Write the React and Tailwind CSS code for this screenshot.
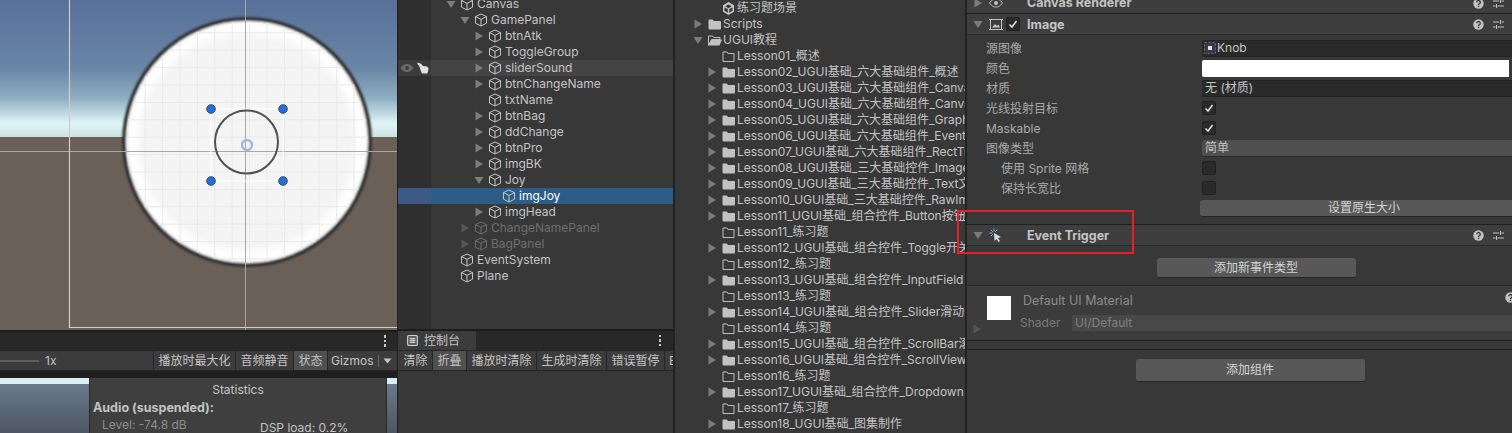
const Tri = ({ open, dim }) => (
  <svg width="10" height="10" viewBox="0 0 10 10" className="shrink-0">
    {open ? <path d="M0.500 2h9L5 9z" fill={dim ? "#555" : "#7c7c7c"} /> : <path d="M1.500 0.500v9L9 5z" fill={dim ? "#555" : "#7c7c7c"} />}
  </svg>
);
const Cube = ({ dim }) => (
  <svg width="14" height="14" viewBox="0 0 14 14" fill="none" stroke={dim ? "#6e6e6e" : "#c6c6c6"} strokeWidth="1" className="shrink-0">
    <path d="M7 1l5.500 2.600v6.600L7 13 1.500 10.200V3.600z" /><path d="M1.500 3.600L7 6.400l5.500-2.800M7 6.400V13" />
  </svg>
);
const Folder = ({ outline }) => (
  <svg width="13" height="11" viewBox="0 0 13 11" className="shrink-0">
    {outline
      ? <path d="M1 1h4l1 1.500h6v8H1z" fill="none" stroke="#c0c0c0" />
      : <path d="M0.500 1.500a1 1 0 0 1 1-1h3.200l1.200 1.500h6.100a1 1 0 0 1 1 1v6.500a1 1 0 0 1-1 1h-10.500a1 1 0 0 1-1-1z" fill="#c2c2c2" />}
  </svg>
);
const OpenFolder = () => (
  <svg width="14" height="11" viewBox="0 0 14 11" className="shrink-0">
    <path d="M0.500 10.500V1h4l1.200 1.500H12V4.500H3.500z" fill="none" stroke="#c2c2c2" />
    <path d="M3.500 4.500H14l-2.500 6H1z" fill="#c2c2c2" />
  </svg>
);
const Kebab = () => (
  <div className="flex flex-col gap-[2px]">
    <span className="w-[2.500px] h-[2.500px] bg-[#c8c8c8]" /><span className="w-[2.500px] h-[2.500px] bg-[#c8c8c8]" /><span className="w-[2.500px] h-[2.500px] bg-[#c8c8c8]" />
  </div>
);
const Help = () => (
  <svg width="11" height="11" viewBox="0 0 11 11" className="shrink-0">
    <circle cx="5.500" cy="5.500" r="5.200" fill="#c2c2c2" />
    <path d="M3.700 4.300a1.800 1.700 0 1 1 2.700 1.400c-.6.400-.9.600-.9 1.200" fill="none" stroke="#383838" strokeWidth="1.300" />
    <rect x="4.800" y="7.700" width="1.400" height="1.400" fill="#383838" />
  </svg>
);
const Presets = () => (
  <svg width="11" height="11" viewBox="0 0 11 11" stroke="#c2c2c2" strokeWidth="1" fill="none" className="shrink-0">
    <path d="M0 3h6M8.500 3H11M7.500 1v4M0 8h2.500M4.500 8H11M3.500 6v4" />
  </svg>
);
const Check = () => (
  <span className="w-[14px] h-[14px] rounded-[2px] bg-[#2a2a2a] border border-[#212121] flex items-center justify-center">
    <svg width="10" height="10" viewBox="0 0 10 10" fill="none" stroke="#e0e0e0" strokeWidth="1.500"><path d="M1.500 5.500L4 8l4.500-6" /></svg>
  </span>
);
const Box = () => <span className="w-[14px] h-[14px] rounded-[2px] bg-[#2a2a2a] border border-[#212121] block" />;

const hier = [
  { d: 0, t: "Canvas", a: "open" },
  { d: 1, t: "GamePanel", a: "open" },
  { d: 2, t: "btnAtk", a: "r" },
  { d: 2, t: "ToggleGroup", a: "r" },
  { d: 2, t: "sliderSound", a: "r", hover: true },
  { d: 2, t: "btnChangeName", a: "r" },
  { d: 2, t: "txtName" },
  { d: 2, t: "btnBag", a: "r" },
  { d: 2, t: "ddChange", a: "r" },
  { d: 2, t: "btnPro", a: "r" },
  { d: 2, t: "imgBK", a: "r" },
  { d: 2, t: "Joy", a: "open" },
  { d: 3, t: "imgJoy", sel: true },
  { d: 2, t: "imgHead", a: "r" },
  { d: 1, t: "ChangeNamePanel", a: "r", dim: true },
  { d: 1, t: "BagPanel", a: "r", dim: true },
  { d: 0, t: "EventSystem" },
  { d: 0, t: "Plane" },
];
const depthPad = ["pl-[15px]", "pl-[29px]", "pl-[43px]", "pl-[57px]"];

const HierRow = ({ r }) => (
  <div className={`h-[16px] flex items-center ${r.sel ? "bg-[#2c5d87] text-white" : r.hover ? "bg-[#444444]" : ""}`}>
    <div className={`w-[33px] h-full shrink-0 flex items-center gap-[3px] pl-[2px] ${r.sel ? "bg-[#3c5a85]" : r.hover ? "bg-[#3b3b3b]" : "bg-[#2f2f2f]"}`}>
      {r.hover && (
        <>
          <svg width="14" height="10" viewBox="0 0 14 10" className="shrink-0"><path d="M0.500 5C3 1.500 5 1 7 1s4 .500 6.500 4C11 8.500 9 9 7 9S3 8.500.500 5z" fill="#6a6a6a" /><circle cx="7" cy="5" r="2" fill="#3d3d3d" /></svg>
          <svg width="12" height="12" viewBox="0 0 12 12" className="shrink-0"><path d="M0.500 0.500l3.500 1.200 2 2.300 4 .500 1.500 1.500-.5 4-1 1.500H5L3.500 8 2.500 4.500l-2-2.500z" fill="#e2e2e2" /></svg>
        </>
      )}
    </div>
    <div className={`flex items-center ${depthPad[r.d]} ${r.dim ? "text-[#6e6e6e]" : ""}`}>
      <span className="w-[10px] mr-[4px] flex">{r.a ? <Tri open={r.a === "open"} dim={r.dim} /> : null}</span>
      <Cube dim={r.dim} />
      <span className="ml-[3px] whitespace-nowrap">{r.t}</span>
    </div>
  </div>
);

const T = "UGUI基础";
const proj = [
  ["Lesson01_概述", "o"],
  ["Lesson02_" + T + "_六大基础组件_概述", "f"],
  ["Lesson03_" + T + "_六大基础组件_Canvas", "f"],
  ["Lesson04_" + T + "_六大基础组件_CanvasScaler", "f"],
  ["Lesson05_" + T + "_六大基础组件_GraphicRaycaster", "f"],
  ["Lesson06_" + T + "_六大基础组件_EventSystem", "f"],
  ["Lesson07_" + T + "_六大基础组件_RectTransform", "f"],
  ["Lesson08_" + T + "_三大基础控件_Image图片", "f"],
  ["Lesson09_" + T + "_三大基础控件_Text文本", "f"],
  ["Lesson10_" + T + "_三大基础控件_RawImage", "f"],
  ["Lesson11_" + T + "_组合控件_Button按钮", "f"],
  ["Lesson11_练习题", "o"],
  ["Lesson12_" + T + "_组合控件_Toggle开关", "f"],
  ["Lesson12_练习题", "o"],
  ["Lesson13_" + T + "_组合控件_InputField", "f"],
  ["Lesson13_练习题", "o"],
  ["Lesson14_" + T + "_组合控件_Slider滑动条", "f"],
  ["Lesson14_练习题", "o"],
  ["Lesson15_" + T + "_组合控件_ScrollBar滚动条", "f"],
  ["Lesson16_" + T + "_组合控件_ScrollView", "f"],
  ["Lesson16_练习题", "o"],
  ["Lesson17_" + T + "_组合控件_Dropdown", "f"],
  ["Lesson17_练习题", "o"],
  ["Lesson18_" + T + "_图集制作", "f"],
];

const ToolBtn = ({ w, children, on }) => (
  <div className={`${w} h-full shrink-0 flex items-center justify-center whitespace-nowrap border-r border-[#262626] ${on ? "bg-[#505050]" : "bg-[#3c3c3c]"}`}>{children}</div>
);

const Row = ({ label, indent, children }) => (
  <div className="h-[20px] flex items-center">
    <div className={`w-[235px] shrink-0 pt-[1px] text-[#aaaaaa] whitespace-nowrap ${indent ? "pl-[34px]" : "pl-[19px]"}`}>{label}</div>
    <div className="flex-1 flex items-center min-w-0">{children}</div>
  </div>
);
const Field = ({ children }) => (
  <div className="w-full h-[17px] rounded-l-[3px] bg-[#2a2a2a] border-y border-[#232323] flex items-center pl-[2px] text-[#c4c4c4] gap-[1px]">{children}</div>
);
const CompHeader = ({ icon, check, title }) => (
  <div className="h-[21px] bg-[#3e3e3e] border-b border-[#2a2a2a] flex items-center shrink-0">
    <span className="ml-[6px] w-[10px] flex"><Tri open /></span>
    <span className="ml-[5px] w-[16px] flex justify-center">{icon}</span>
    <span className="w-[14px] ml-[2px] flex">{check}</span>
    <span className="ml-[7px] pt-[1px] font-bold text-[12.500px] text-[#c4c4c4] whitespace-nowrap">{title}</span>
    <span className="ml-auto flex items-center gap-[9px] pr-[8px]"><Help /><Presets /></span>
  </div>
);
const ActionBtn = ({ w, h, children }) => (
  <div className={`${w} ${h} bg-[#585858] rounded-[3px] border-b border-[#242424] flex items-center justify-center text-[#d4d4d4]`}>{children}</div>
);

const grid = [];
for (let i = 0; i < 24; i++) grid.push(i * 17.400 + 1);

export default function App() {
  return (
    <div className="relative w-[1512px] h-[433px] overflow-hidden flex bg-[#232323] text-[#c4c4c4] text-[12px] leading-[16px] font-['Inter','Noto_Sans_CJK_SC',sans-serif]">
      {/* Scene + game column */}
      <div className="w-[398px] shrink-0 flex flex-col border-r border-[#1f1f1f]">
        <svg width="397" height="330" viewBox="0 0 397 330" className="shrink-0 block">
          <defs>
            <linearGradient id="sky" x1="0" y1="0" x2="0" y2="1">
              <stop offset="0" stopColor="#58709a" />
              <stop offset="0.5" stopColor="#6a86a6" />
              <stop offset="0.72" stopColor="#8fb0c2" />
              <stop offset="0.9" stopColor="#dff4f7" />
              <stop offset="1" stopColor="#cfe4e2" />
            </linearGradient>
            <radialGradient id="knob" cx="0.5" cy="0.5" r="0.5">
              <stop offset="0.84" stopColor="#f4f4f4" />
              <stop offset="0.93" stopColor="#ffffff" />
              <stop offset="1" stopColor="#f6f6f6" />
            </radialGradient>
            <filter id="soft"><feGaussianBlur stdDeviation="1.300" /></filter>
            <clipPath id="cc"><circle cx="247" cy="142" r="121" /></clipPath>
          </defs>
          <rect width="397" height="330" fill="#6a6058" />
          <rect width="397" height="137" fill="url(#sky)" />
          <circle cx="247" cy="142" r="123" fill="url(#knob)" stroke="#333333" strokeWidth="4" filter="url(#soft)" />
          <g clipPath="url(#cc)" stroke="#e9e9e9" strokeWidth="1">
            {grid.map((g, i) => <path key={i} d={`M${g + 5} 0V290`} />)}
            {grid.map((g, i) => <path key={"h" + i} d={`M100 ${g - 3}H380`} />)}
          </g>
          <path d="M245.500 0V330M0 151.500H397" stroke="#a8a8a8" strokeWidth="1" />
          <path d="M69.500 0V327.500H397" fill="none" stroke="#d0cdc8" strokeWidth="1.200" />
          <rect x="211" y="109" width="72" height="72" fill="none" stroke="#ffffff" strokeWidth="1" />
          <circle cx="246.500" cy="142" r="31.500" fill="none" stroke="#505050" strokeWidth="2" />
          <circle cx="247" cy="145" r="5" fill="none" stroke="#9cb9de" strokeWidth="2.400" />
          {[[211, 109], [283, 109], [211, 181], [283, 181]].map(([x, y]) => (
            <circle key={x + "" + y} cx={x} cy={y} r="4.300" fill="#1f6fe0" stroke="#3c4a5c" strokeWidth="1" />
          ))}
        </svg>
        <div className="h-[2px] bg-[#1c1c1c] shrink-0" />
        <div className="h-[18px] bg-[#282828] shrink-0 flex items-center justify-end pr-[11px]"><Kebab /></div>
        <div className="h-[21px] bg-[#3c3c3c] border-y border-[#262626] shrink-0 flex items-center">
          <div className="w-[39px] h-[2px] bg-[#5e5e5e]" />
          <span className="ml-[6px] w-[108px]">1x</span>
          <div className="h-full border-l border-[#262626]" />
          <ToolBtn w="w-[82px]">播放时最大化</ToolBtn>
          <ToolBtn w="w-[58px]">音频静音</ToolBtn>
          <ToolBtn w="w-[34px]" on>状态</ToolBtn>
          <div className="flex-1 flex items-center pl-[3px] gap-[4px]">
            <span>Gizmos</span>
            <span className="h-[12px] border-l border-[#666]" />
            <svg width="9" height="6" viewBox="0 0 9 6"><path d="M0.500 0.500h8L4.500 5.500z" fill="#c4c4c4" /></svg>
          </div>
        </div>
        <div className="h-[7px] bg-[#1f1f1f] shrink-0" />
        <div className="flex-1 flex bg-[linear-gradient(#d8f0f2_0,#d8f0f2_6px,#6a7a8c_6px,#4d5664_100%)] pl-[89px] pr-[10px] min-h-0">
          <div className="flex-1 bg-[#3f3f3f] border-x border-[#2a2a2a] overflow-hidden">
            <div className="text-center h-[22px] pt-[4px]">Statistics</div>
            <div className="pl-[3px] font-bold text-[12.500px] h-[17px]">Audio (suspended):</div>
            <div className="flex text-[#8e8e8e]">
              <span className="pl-[12px] w-[170px]">Level: -74.8 dB</span>
              <span className="text-[#c4c4c4] pt-[3px]">DSP load: 0.2%</span>
            </div>
          </div>
        </div>
      </div>

      {/* Hierarchy + console column */}
      <div className="w-[275px] shrink-0 flex flex-col">
        <div className="h-[329px] shrink-0 bg-[#383838] overflow-hidden flex">
          <div className="flex-1 flex flex-col -mt-[4px]">
            {hier.map((r) => <HierRow key={r.t} r={r} />)}
            <div className="flex-1 flex"><div className="w-[33px] bg-[#2f2f2f]" /></div>
          </div>
        </div>
        <div className="h-[2px] bg-[#1c1c1c] shrink-0" />
        <div className="h-[19px] bg-[#282828] shrink-0 flex items-center">
          <div className="w-[78px] h-full bg-[#3c3c3c] flex items-center pl-[9px] gap-[6px]">
            <svg width="11" height="11" viewBox="0 0 11 11" fill="none" stroke="#d0d0d0" strokeWidth="1.300"><rect x="0.700" y="0.700" width="9.600" height="9.600" rx="1" /><path d="M2.500 3.500h6M2.500 5.500h6M2.500 7.500h6" /></svg>
            <span>控制台</span>
          </div>
          <div className="ml-auto pr-[12px]"><Kebab /></div>
        </div>
        <div className="h-[21px] bg-[#3c3c3c] border-y border-[#262626] shrink-0 flex items-center overflow-hidden pl-[1px]">
          <ToolBtn w="w-[34px]">清除</ToolBtn>
          <ToolBtn w="w-[34px]" on>折叠</ToolBtn>
          <ToolBtn w="w-[70px]">播放时清除</ToolBtn>
          <ToolBtn w="w-[70px]">生成时清除</ToolBtn>
          <ToolBtn w="w-[58px]">错误暂停</ToolBtn>
          <span className="pl-[4px] whitespace-nowrap">E</span>
        </div>
        <div className="flex-1 bg-[#383838]" />
      </div>

      {/* Project column */}
      <div className="ml-[2px] w-[290px] shrink-0 bg-[#383838] overflow-hidden flex flex-col">
        <div className="h-[16px] shrink-0 flex items-center pl-[47px] whitespace-nowrap">
          <svg width="13" height="13" viewBox="0 0 13 13" fill="#c4c4c4" className="shrink-0"><path d="M6.500 0L12 3.200v6.600L6.500 13 1 9.800V3.200zM6.500 2.500L3.300 4.300l3.200 1.900 3.200-1.900zM2.500 5.500v3.300l3.300 1.900V7.100zM10.500 5.500L7.200 7.100v3.600l3.300-1.900z" /></svg>
          <span className="ml-[2px]">练习题场景</span>
        </div>
        <div className="h-[16px] shrink-0 flex items-center pl-[18px] whitespace-nowrap">
          <Tri /><span className="ml-[5px] flex"><Folder /></span><span className="ml-[2px]">Scripts</span>
        </div>
        <div className="h-[16px] shrink-0 flex items-center pl-[18px] whitespace-nowrap">
          <Tri open /><span className="ml-[5px] flex"><OpenFolder /></span><span className="ml-[1px]">UGUI教程</span>
        </div>
        {proj.map(([t, k], i) => (
          <div key={i} className="h-[16px] shrink-0 flex items-center pl-[32px] whitespace-nowrap">
            <span className="w-[10px] flex">{k === "f" ? <Tri /> : null}</span>
            <span className="ml-[5px] flex"><Folder outline={k === "o"} /></span>
            <span className="ml-[2px]">{t}</span>
          </div>
        ))}
      </div>

      {/* Inspector column */}
      <div className="ml-[2px] flex-1 min-w-0 bg-[#383838] overflow-hidden flex flex-col">
        <div className="-mt-[7px] h-[21px] bg-[#3e3e3e] border-b border-[#1f1f1f] flex items-center shrink-0">
          <span className="ml-[6px] w-[10px] flex"><Tri /></span>
          <span className="ml-[5px] w-[16px] flex justify-center">
            <svg width="14" height="10" viewBox="0 0 14 10"><path d="M0.500 5C3 1.500 5 1 7 1s4 .500 6.500 4C11 8.500 9 9 7 9S3 8.500.500 5z" fill="none" stroke="#c2c2c2" /><circle cx="7" cy="5" r="2" fill="#c2c2c2" /></svg>
          </span>
          <span className="ml-[23px] font-bold text-[12.500px] whitespace-nowrap">Canvas Renderer</span>
          <span className="ml-auto flex items-center gap-[9px] pr-[8px]"><Help /><Presets /></span>
        </div>
        <CompHeader
          title="Image"
          check={<Check />}
          icon={<svg width="14" height="13" viewBox="0 0 14 13" fill="none" stroke="#c4c4c4"><rect x="1.500" y="1.500" width="11" height="10" /><path d="M0 1.500h3M11 1.500h3M0 11.500h3M11 11.500h3" /><path d="M3 9.500l3-3.500 2 2 1.500-1.500L11 9.500z" fill="#c4c4c4" stroke="none" /></svg>}
        />
        <div className="h-[3px] shrink-0" />
        <Row label="源图像">
          <Field>
            <svg width="12" height="12" viewBox="0 0 12 12" className="shrink-0"><rect x="0.500" y="0.500" width="11" height="11" fill="#3a3a3a" stroke="#7a5fb0" strokeDasharray="2 2" /><rect x="4" y="4" width="4" height="4" fill="#e0e0e0" /></svg>
            <span>Knob</span>
          </Field>
        </Row>
        <Row label="颜色"><div className="w-full h-[17px] bg-white rounded-l-[2px] mr-[3px]" /></Row>
        <Row label="材质"><Field><span className="pl-[1px]">无 (材质)</span></Field></Row>
        <Row label="光线投射目标"><Check /></Row>
        <Row label="Maskable"><Check /></Row>
        <Row label="图像类型">
          <div className="w-full h-[17px] rounded-l-[3px] bg-[#505050] border-b border-[#2a2a2a] flex items-center pl-[3px] text-[#c4c4c4]">简单</div>
        </Row>
        <Row label="使用 Sprite 网格" indent><Box /></Row>
        <Row label="保持长宽比" indent><Box /></Row>
        <div className="h-[20px] flex items-center pl-[233px] shrink-0">
          <div className="w-full h-[17px] bg-[#585858] rounded-l-[3px] border-b border-[#242424] flex items-center justify-center pl-[16px] text-[#d4d4d4]">设置原生大小</div>
        </div>
        <div className="h-[6px] shrink-0" />
        <div className="border-t border-[#1f1f1f] shrink-0" />
        <CompHeader
          title="Event Trigger"
          check={null}
          icon={<svg width="14" height="15" viewBox="0 0 14 15" fill="none"><path d="M5 5l7 4-3 1 2 3-1.500 1-2-3-2 2z" fill="#d8d8d8" /><path d="M5 0.500v3M0.500 5h3M1.800 1.800l2 2M8.200 1.800l-2 2M1.800 8.200l2-2" stroke="#6fb8dc" strokeWidth="1" /></svg>}
        />
        <div className="flex justify-center pt-[12px] pb-[7px] pl-[33px] shrink-0 border-b border-[#2a2a2a]">
          <ActionBtn w="w-[199px]" h="h-[20px]">添加新事件类型</ActionBtn>
        </div>
        <div className="h-[55px] bg-[#3c3c3c] shrink-0 border-b border-[#1f1f1f] flex overflow-hidden text-[#8c8c8c]">
          <div className="w-[10px] ml-[5px] self-end mb-[6px] flex"><Tri dim /></div>
          <div className="ml-[5px] mt-[10px] w-[24px] h-[24px] bg-white shrink-0" />
          <div className="flex-1 min-w-0 flex flex-col pl-[9px]">
            <div className="flex pt-[7px] h-[28px] pl-[3px]">
              <span className="whitespace-nowrap text-[12.500px]">Default UI Material</span>
              <span className="ml-auto -mr-[4px] -mt-[1px]"><Help /></span>
            </div>
            <div className="flex items-center h-[17px]">
              <span className="w-[52px] shrink-0 text-[#7a7a7a]">Shader</span>
              <div className="flex-1 h-[16px] bg-[#484848] rounded-l-[2px] pl-[3px] text-[#808080] flex items-center">UI/Default</div>
            </div>
          </div>
        </div>
        <div className="h-[9px] shrink-0 border-b border-[#1f1f1f]" />
        <div className="flex justify-center pt-[9px] pl-[21px]">
          <ActionBtn w="w-[229px]" h="h-[23px]">添加组件</ActionBtn>
        </div>
      </div>

      {/* Annotation rectangle drawn over the screenshot */}
      <div className="absolute left-[957px] top-[210px] w-[177px] h-[44px] border-2 border-[#e81e2a] pointer-events-none" />
    </div>
  );
}
